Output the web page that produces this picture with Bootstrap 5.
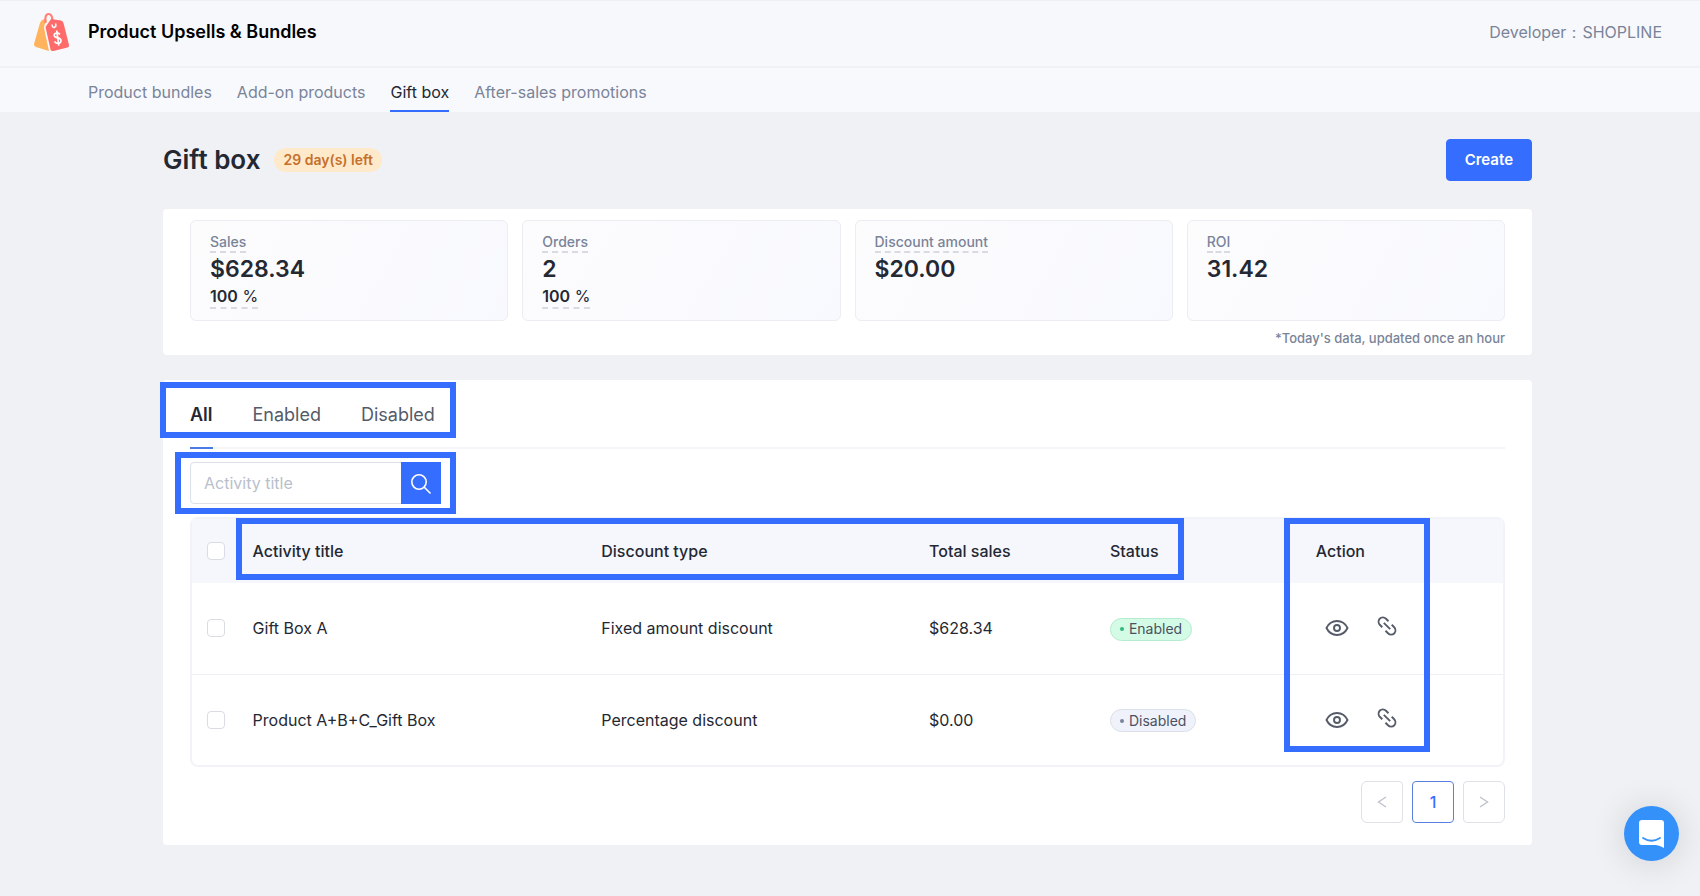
<!DOCTYPE html>
<html lang="en">
<head>
<meta charset="utf-8">
<meta name="viewport" content="width=device-width, initial-scale=1">
<title>Product Upsells &amp; Bundles</title>
<link rel="stylesheet" href="https://cdn.jsdelivr.net/npm/bootstrap@5.3.0/dist/css/bootstrap.min.css">
<style>
  :root { --brand: #356dff; --ink: #242833; --muted: #7a8499; }
  body { font-family: Inter, "Liberation Sans", sans-serif; font-size: 16px; line-height: 24px; color: var(--ink); background: #f0f1f5; min-height: 100vh; }
  a { text-decoration: none; color: inherit; }
  .app-header { height: 68px; padding: 0 38px 4px 34px; background: #f7f8fc; border-top: 1px solid #eff0f4; border-bottom: 2px solid #f1f2f6; }
  .app-brand { gap: 18px; }
  .app-name { font-size: 18px; font-weight: 600; color: #000; }
  .developer { color: var(--muted); }
  .app-nav { height: 44px; padding: 0 88px; background: #f8f9fd; gap: 25px; }
  .app-nav a { color: var(--muted); height: 44px; line-height: 48px; border-bottom: 2px solid transparent; }
  .app-nav a.active { color: var(--ink); border-color: var(--brand); }
  .page-main { padding: 27px 168px 51px 163px; }
  .page-head { margin-bottom: 28px; }
  .page-title { gap: 14px; }
  h1 { font-size: 26px; line-height: 36px; font-weight: 600; }
  .trial-pill { font-size: 14px; line-height: 24px; font-weight: 600; color: #c5702b; background: #feeacb; border-radius: 12px; padding: 0 9px; }
  .btn-primary { --bs-btn-bg: var(--brand); --bs-btn-border-color: var(--brand); }
  .btn-create { height: 42px; padding: 0 18px; font-size: 15px; font-weight: 600; border-radius: 4px; }
  .panel { background: #fff; border-radius: 4px; }
  .stats-panel { padding: 11px 27px 8px; margin-bottom: 25px; }
  .list-panel { padding: 2px 27px 22px; }
  .stat-grid { display: grid; grid-template-columns: repeat(4, 1fr); gap: 14px; }
  .stat { display: flex; flex-direction: column; align-items: flex-start; min-height: 101px; padding: 12px 19px 10px; border: 1px solid #ebedf2; border-radius: 6px; background: linear-gradient(120deg, #fcfcfd, #f8f9fe); }
  .dashed { border-bottom: 2px dashed #d8dbe2; }
  .stat-label { font-size: 14px; line-height: 18px; font-weight: 500; color: var(--muted); }
  .stat-value { font-size: 23px; line-height: 32px; font-weight: 600; }
  .stat-share { font-size: 16px; line-height: 22px; }
  .note { font-size: 13px; line-height: 18px; font-weight: 500; color: var(--muted); }
  .marker { position: absolute; border: 6px solid var(--brand); pointer-events: none; z-index: 5; }
  .marker-tabs { left: -30px; right: -21px; top: 0; height: 56px; }
  .marker-search { inset: -10px -15px -10px -14px; }
  .marker-head { left: 44px; right: 24.3%; top: -1px; height: 62px; }
  .marker-action { left: 83.3%; right: 73px; top: -1px; bottom: 13px; }
  .filter-bar { border-bottom: 2px solid #f4f5f8; }
  .filter-tabs { font-size: 18px; gap: 40px; }
  .filter-tabs a { color: #555b69; line-height: 66px; height: 67px; border-bottom: 2px solid transparent; margin-bottom: -2px; }
  .filter-tabs a.active { color: var(--ink); font-weight: 600; border-color: #4a7be8; }
  .search-box { width: 251px; height: 42px; margin: 13px 0; }
  .search-box .form-control { font-size: 16px; padding: 0 13px; border-color: #dde0e8; border-radius: 4px; }
  .search-box .form-control::placeholder { color: #b9bfcc; }
  .search-box .btn { width: 40px; padding: 0; border-radius: 4px; }
  .table-shell { border: 2px solid #f1f3f8; border-radius: 8px; }
  .offers { table-layout: fixed; font-size: 16px; color: var(--ink); }
  .offers th, .offers td { padding: 0 16px; vertical-align: middle; border: 0; color: var(--ink); background: none; }
  .offers thead tr { height: 64px; background: #f5f7fc; }
  .offers th { font-weight: 500; }
  .offers tbody tr { height: 91px; }
  .offers tbody tr + tr { border-top: 1px solid #eef0f4; }
  .offers .pick { padding: 0 0 0 15px; }
  .offers .form-check-input { display: block; width: 18px; height: 18px; margin: 0; border: 1px solid #d9dce4; border-radius: 4px; }
  .state { display: inline-flex; align-items: center; gap: 5px; height: 23px; padding: 0 9px; font-size: 14px; border-radius: 12px; border: 1px solid #dbdfe9; background: #eff2fa; color: #4b5162; vertical-align: middle; }
  .state::before { content: ""; width: 4px; height: 4px; border-radius: 50%; background: #7a8499; }
  .state.on { background: #d3fbe5; border-color: #b5ecd0; }
  .state.on::before { background: #35b67c; }
  .row-actions { gap: 28px; padding-left: 9px; }
  .icon-btn { border: 0; background: none; padding: 0; display: flex; color: #555b69; }
  .pager { gap: 9px; margin: 14px 0 0; }
  .pager .page-link { width: 42px; height: 42px; padding: 0; display: flex; align-items: center; justify-content: center; border: 1px solid #dfe1e8; border-radius: 4px; color: #bfc3cc; font-size: 16px; font-weight: 500; background: #fff; }
  .pager .page-item:not(:first-child) .page-link { margin-left: 0; }
  .pager .active .page-link { border-color: #5b7fe0; color: var(--brand); }
  .chat { position: fixed; right: 21px; bottom: 35px; width: 55px; height: 55px; border: 0; border-radius: 50%; background: #3491fa; padding: 0; box-shadow: 0 2px 36px rgba(0,0,0,.14); }
</style>
</head>
<body>
<svg class="d-none" aria-hidden="true">
  <symbol id="eye" viewBox="0 0 24 18"><g fill="none" stroke="currentColor" stroke-width="1.900"><path d="M1.500 9 C6 -.3 18 -.3 22.500 9 C18 18.300 6 18.300 1.500 9 Z"/><circle cx="12" cy="9" r="3"/></g></symbol>
  <symbol id="chain" viewBox="0 0 20 20"><g fill="none" stroke="currentColor" stroke-width="1.900"><path d="M5.300 11.200 L3 9 A4.600 4.600 0 0 1 2.600 2.800 A4.600 4.600 0 0 1 9 2.800 L11.500 5.200"/><path d="M14.700 8.800 L17 11 A4.600 4.600 0 0 1 17.400 17.200 A4.600 4.600 0 0 1 11 17.200 L8.500 14.800"/><path d="M6.800 6.800 L13.200 13.200"/></g></symbol>
</svg>
<header class="app-header d-flex align-items-center justify-content-between">
  <div class="app-brand d-flex align-items-center">
    <svg width="36" height="40" viewBox="0 0 36 40" aria-hidden="true">
      <path d="M10 7 Q7 8 6 11 L0 32 Q-.3 34 2 35 L15 39 L10 16 Q10 13 13 8 Z" fill="#ffb35c"/>
      <path d="M11.500 11 Q10.500 2 14.500 2 Q18 2 18.500 8" fill="none" stroke="#ff8076" stroke-width="2.200"/>
      <path d="M11.500 15 L17 7 L27 8.500 Q29 9 29.500 11 L35 33 Q35.300 35 33.500 35.500 L19.500 39 Q17 39.500 16.500 37.500 Z" fill="#ff6b6b"/>
      <path d="M18 12.500 Q18.500 16.500 21 15 Q22.500 14 21.500 11.500" fill="none" stroke="#fff" stroke-width="1.500"/>
      <path d="M26 22.300 Q24 20.300 21.500 21.200 Q19.300 22.500 20.800 24.700 Q21.700 25.600 24 25.900 Q26.800 26.600 27 28.700 Q26.800 31.400 24.100 31.400 Q21.800 31.400 20.500 29.500 M22.700 18.500 L24.800 33.700" fill="none" stroke="#fff" stroke-width="1.700"/>
    </svg>
    <span class="app-name">Product Upsells &amp; Bundles</span>
  </div>
  <span class="developer">Developer：SHOPLINE</span>
</header>
<nav class="app-nav d-flex" aria-label="Sections">
  <a href="#">Product bundles</a>
  <a href="#">Add-on products</a>
  <a href="#" class="active" aria-current="page">Gift box</a>
  <a href="#">After-sales promotions</a>
</nav>

<main class="page-main">
  <div class="page-head d-flex align-items-center justify-content-between">
    <div class="page-title d-flex align-items-center">
      <h1 class="m-0">Gift box</h1>
      <span class="trial-pill">29 day(s) left</span>
    </div>
    <button type="button" class="btn btn-primary btn-create">Create</button>
  </div>

  <section class="panel stats-panel">
    <div class="stat-grid">
      <div class="stat"><span class="stat-label dashed">Sales</span><div class="stat-value">$628.34</div><span class="stat-share dashed"><span class="fw-semibold">100</span> %</span></div>
      <div class="stat"><span class="stat-label dashed">Orders</span><div class="stat-value">2</div><span class="stat-share dashed"><span class="fw-semibold">100</span> %</span></div>
      <div class="stat"><span class="stat-label dashed">Discount amount</span><div class="stat-value">$20.00</div></div>
      <div class="stat"><span class="stat-label dashed">ROI</span><div class="stat-value">31.42</div></div>
    </div>
    <div class="note text-end mt-2">*Today's data, updated once an hour</div>
  </section>

  <section class="panel list-panel">
    <div class="filter-bar d-flex">
      <div class="filter-tabs d-flex position-relative">
        <a href="#" class="active">All</a>
        <a href="#">Enabled</a>
        <a href="#">Disabled</a>
        <div class="marker marker-tabs"></div>
      </div>
    </div>
    <form class="search-box input-group" role="search">
      <input type="text" class="form-control" placeholder="Activity title" aria-label="Activity title">
      <button type="button" class="btn btn-primary" aria-label="Search">
        <svg width="22" height="22" viewBox="0 0 22 22" fill="none" stroke="#fff" stroke-width="1.600"><circle cx="9" cy="9" r="7.200"/><path d="M14 14 L20.500 20.500"/></svg>
      </button>
      <div class="marker marker-search"></div>
    </form>
    <div class="table-shell position-relative">
      <table class="offers table mb-0">
        <colgroup><col style="width:3.4%"><col style="width:26.6%"><col style="width:25%"><col style="width:13.8%"><col style="width:15.7%"><col></colgroup>
        <thead><tr>
          <th class="pick"><input class="form-check-input" type="checkbox" aria-label="Select all"></th>
          <th>Activity title</th><th>Discount type</th><th>Total sales</th><th>Status</th><th>Action</th>
        </tr></thead>
        <tbody>
          <tr>
            <td class="pick"><input class="form-check-input" type="checkbox" aria-label="Select Gift Box A"></td>
            <td>Gift Box A</td><td>Fixed amount discount</td><td>$628.34</td><td><span class="state on">Enabled</span></td>
            <td><div class="row-actions d-flex align-items-center">
              <button class="icon-btn" type="button" aria-label="View"><svg width="24" height="18"><use href="#eye"/></svg></button>
              <button class="icon-btn mb-1" type="button" aria-label="Copy link"><svg width="20" height="20"><use href="#chain"/></svg></button>
            </div></td>
          </tr>
          <tr>
            <td class="pick"><input class="form-check-input" type="checkbox" aria-label="Select Product A+B+C_Gift Box"></td>
            <td>Product A+B+C_Gift Box</td><td>Percentage discount</td><td>$0.00</td><td><span class="state">Disabled</span></td>
            <td><div class="row-actions d-flex align-items-center">
              <button class="icon-btn" type="button" aria-label="View"><svg width="24" height="18"><use href="#eye"/></svg></button>
              <button class="icon-btn mb-1" type="button" aria-label="Copy link"><svg width="20" height="20"><use href="#chain"/></svg></button>
            </div></td>
          </tr>
        </tbody>
      </table>
      <div class="marker marker-head"></div>
      <div class="marker marker-action"></div>
    </div>
    <ul class="pagination pager justify-content-end">
      <li class="page-item"><button class="page-link" type="button" aria-label="Previous"><svg width="10" height="12" viewBox="0 0 10 12" fill="none" stroke="currentColor" stroke-width="1.400"><path d="M9 1 L1.500 6 L9 11"/></svg></button></li>
      <li class="page-item active"><a class="page-link" href="#" aria-current="page">1</a></li>
      <li class="page-item"><button class="page-link" type="button" aria-label="Next"><svg width="10" height="12" viewBox="0 0 10 12" fill="none" stroke="currentColor" stroke-width="1.400"><path d="M1 1 L8.500 6 L1 11"/></svg></button></li>
    </ul>
  </section>
</main>
<button class="chat d-flex align-items-center justify-content-center" type="button" aria-label="Open chat">
  <svg width="26" height="28" viewBox="0 0 26 28"><path d="M3 0 H22 Q25 0 25 3 V28 Q21 25.500 17 25 H3 Q0 25 0 22 V3 Q0 0 3 0 Z" fill="#fff"/><path d="M4 18 Q12.500 23.500 21 18" fill="none" stroke="#3491fa" stroke-width="1.800" stroke-linecap="round"/></svg>
</button>
<script src="https://cdn.jsdelivr.net/npm/bootstrap@5.3.0/dist/js/bootstrap.bundle.min.js"></script>
</body>
</html>
